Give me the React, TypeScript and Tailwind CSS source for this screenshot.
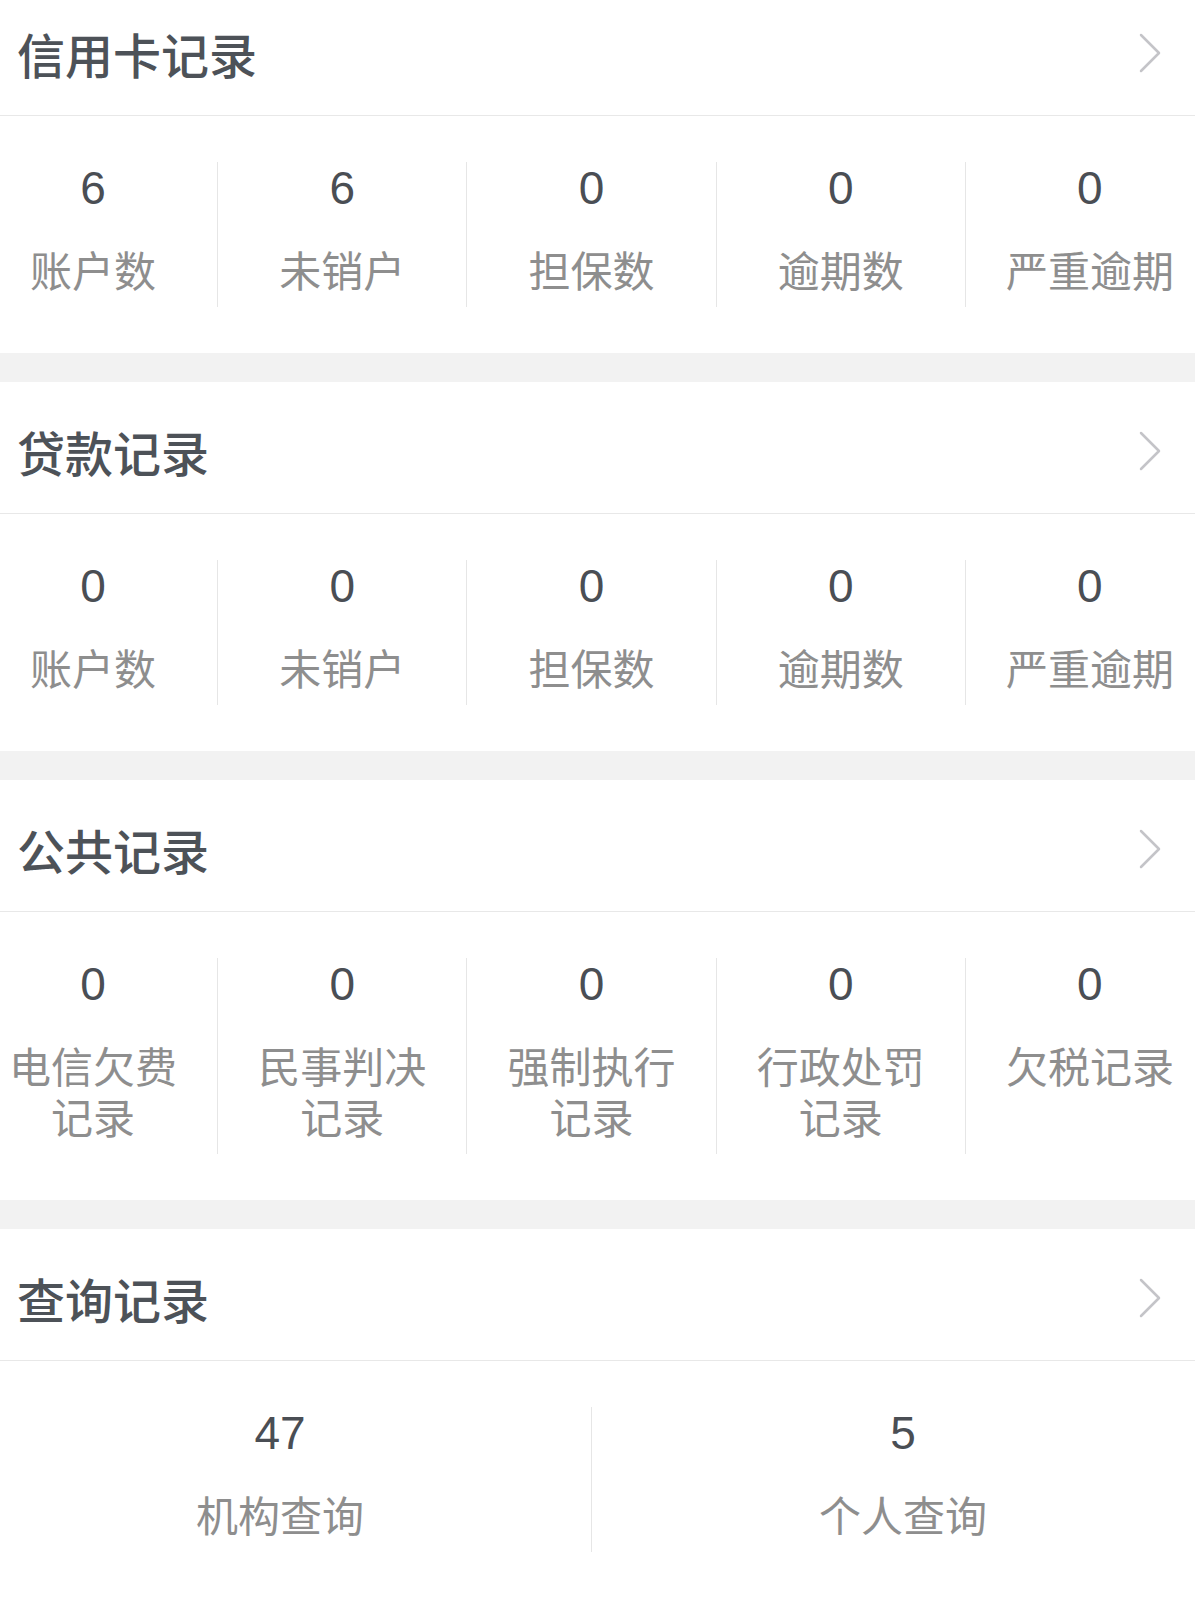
import React from 'react';

const sections = [
  {
    title: '信用卡记录',
    stats: [
      { value: '6', label: ['账户数'] },
      { value: '6', label: ['未销户'] },
      { value: '0', label: ['担保数'] },
      { value: '0', label: ['逾期数'] },
      { value: '0', label: ['严重逾期'] },
    ],
  },
  {
    title: '贷款记录',
    stats: [
      { value: '0', label: ['账户数'] },
      { value: '0', label: ['未销户'] },
      { value: '0', label: ['担保数'] },
      { value: '0', label: ['逾期数'] },
      { value: '0', label: ['严重逾期'] },
    ],
  },
  {
    title: '公共记录',
    stats: [
      { value: '0', label: ['电信欠费', '记录'] },
      { value: '0', label: ['民事判决', '记录'] },
      { value: '0', label: ['强制执行', '记录'] },
      { value: '0', label: ['行政处罚', '记录'] },
      { value: '0', label: ['欠税记录'] },
    ],
  },
  {
    title: '查询记录',
    stats: [
      { value: '47', label: ['机构查询'] },
      { value: '5', label: ['个人查询'] },
    ],
  },
];

const cjk = "font-['Noto_Sans_CJK_SC','Noto_Sans',sans-serif]";

function Chevron() {
  return (
    <svg width="24" height="40" viewBox="0 0 24 40" fill="none">
      <polyline points="3,2 21,20 3,38" stroke="#c4c4c8" strokeWidth="2.5" strokeLinecap="round" strokeLinejoin="round" />
    </svg>
  );
}

export default function App() {
  return (
    <div className="w-[1195px] h-[1597px] overflow-hidden bg-white">
      <div className="w-[1245px] -ml-[31px] -mt-[16px]">
        {sections.map((section, i) => (
          <div key={section.title}>
            {i > 0 && <div className="h-[29px] bg-[#f2f2f2]" />}
            <div className="h-[132px] flex items-center justify-between pl-[48px] pr-[52px] pt-[6px] border-b border-[#e8e8e8]">
              <h2 className={`${cjk} text-[48px] leading-none font-medium text-[#4d5258]`}>{section.title}</h2>
              <Chevron />
            </div>
            <div className="flex pt-[46px] pb-[46px]">
              {section.stats.map((stat, j) => (
                <div
                  key={j}
                  className={`flex-1 flex flex-col items-center pb-[13px] ${j > 0 ? 'border-l border-[#e6e6e6]' : ''}`}
                >
                  <div className="font-['Liberation_Sans',Arial,sans-serif] text-[46px] leading-[53px] text-[#4a4e54]">
                    {stat.value}
                  </div>
                  <div className={`${cjk} mt-[28px] text-[42px] leading-[51px] text-[#8e8e8e] text-center`}>
                    {stat.label.map((line) => (
                      <div key={line}>{line}</div>
                    ))}
                  </div>
                </div>
              ))}
            </div>
          </div>
        ))}
      </div>
    </div>
  );
}
